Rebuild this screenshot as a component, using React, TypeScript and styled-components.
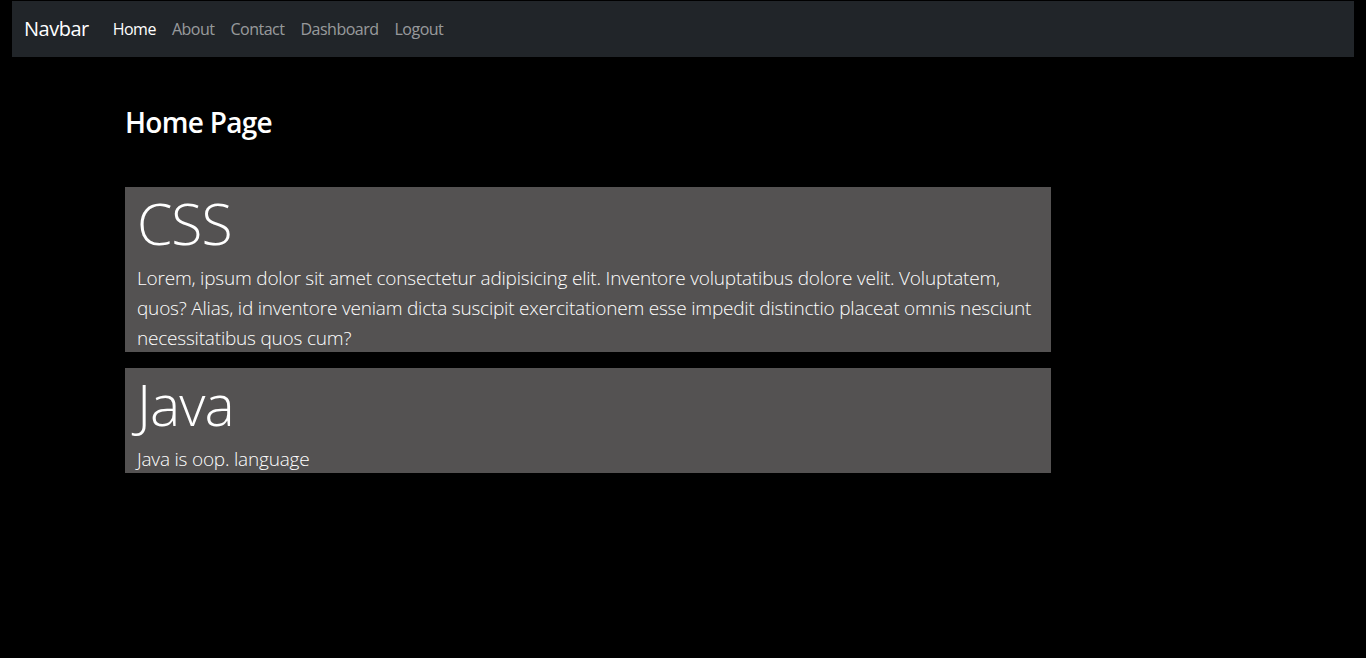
import React from "react";
import styled, { createGlobalStyle } from "styled-components";

const Global = createGlobalStyle`
  html, body { margin: 0; padding: 0; background: #000; }
  body {
    font-family: "Open Sans", "Noto Sans", sans-serif;
    color: #fff;
  }
  * { box-sizing: border-box; }
`;

const Page = styled.div`
  min-height: 658px;
  background: #000;
  padding: 1px 12px 0;
`;

const Nav = styled.nav`
  height: 56px;
  background: #212529;
  display: flex;
  align-items: center;
  padding: 8px 12px;
`;

const Brand = styled.a`
  font-size: 20px;
  line-height: 30px;
  color: #fff;
  margin-right: 16px;
  text-decoration: none;
  letter-spacing: -0.5px;
`;

const NavList = styled.ul`
  display: flex;
  list-style: none;
  margin: 0;
  padding: 0;
`;

const NavLink = styled.a<{ $active?: boolean }>`
  display: block;
  padding: 8px;
  font-size: 16px;
  line-height: 24px;
  letter-spacing: -0.5px;
  color: ${(p) => (p.$active ? "#fff" : "rgba(255,255,255,0.55)")};
  text-decoration: none;
`;

const Main = styled.main`
  padding: 48px 0 0 113px;
  width: 1039px;
`;

const Title = styled.h3`
  margin: 0 0 48px;
  font-size: 28px;
  line-height: 34px;
  font-weight: 600;
  letter-spacing: -0.7px;
`;

const Cards = styled.div`
  display: flex;
  flex-direction: column;
  gap: 16px;
`;

const Card = styled.section`
  background: #545252;
  padding: 0 12px;
`;

const CardTitle = styled.h1`
  margin: 0 0 3px;
  font-size: 57px;
  line-height: 72px;
  font-weight: 300;
  letter-spacing: -1px;
`;

const CardText = styled.p`
  margin: 0;
  padding-top: 1px;
  margin-bottom: -1px;
  font-size: 19px;
  line-height: 30px;
  font-weight: 300;
  letter-spacing: -0.2px;
`;

const links = ["Home", "About", "Contact", "Dashboard", "Logout"];

const items = [
  {
    title: "CSS",
    text: "Lorem, ipsum dolor sit amet consectetur adipisicing elit. Inventore voluptatibus dolore velit. Voluptatem, quos? Alias, id inventore veniam dicta suscipit exercitationem esse impedit distinctio placeat omnis nesciunt necessitatibus quos cum?",
  },
  { title: "Java", text: "Java is oop. language" },
];

export default function App() {
  return (
    <Page>
      <Global />
      <Nav>
        <Brand href="#">Navbar</Brand>
        <NavList>
          {links.map((l, i) => (
            <li key={l}>
              <NavLink href="#" $active={i === 0}>
                {l}
              </NavLink>
            </li>
          ))}
        </NavList>
      </Nav>
      <Main>
        <Title>Home Page</Title>
        <Cards>
          {items.map((it) => (
            <Card key={it.title}>
              <CardTitle>{it.title}</CardTitle>
              <CardText>{it.text}</CardText>
            </Card>
          ))}
        </Cards>
      </Main>
    </Page>
  );
}
